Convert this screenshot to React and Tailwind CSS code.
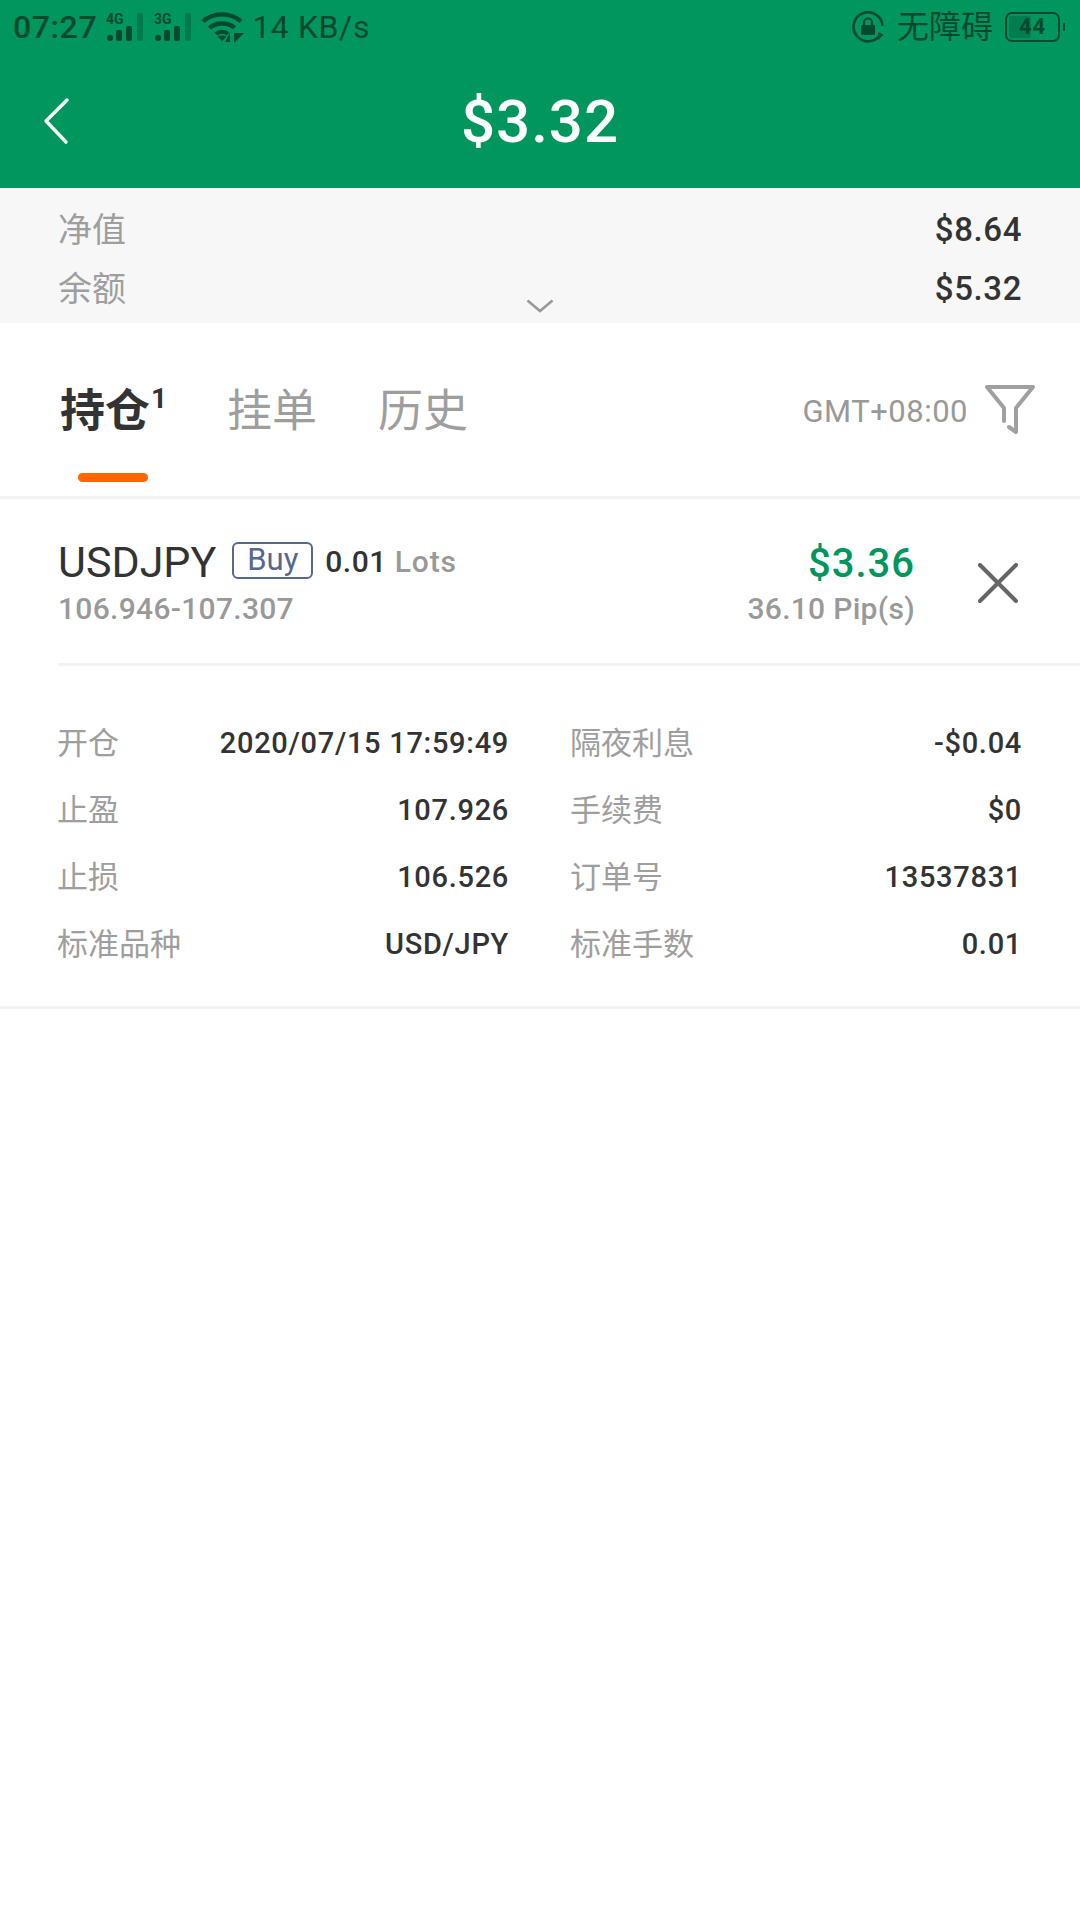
function Signal({ label }) {
  return (
    <svg width="37" height="29" viewBox="0 0 37 29" className="shrink-0 overflow-visible">
      <text x="0" y="11" fontSize="14" fontWeight="700" fontFamily="Roboto" fill="#03492e">{label}</text>
      <circle cx="4" cy="25" r="3" fill="#03492e" />
      <rect x="10" y="17" width="6" height="11" rx="2" fill="#03492e" />
      <rect x="20" y="13" width="6" height="15" rx="2" fill="#03492e" />
      <rect x="31" y="0" width="6" height="28" rx="2" fill="#03492e" fillOpacity="0.35" />
    </svg>
  )
}

function Wifi() {
  return (
    <svg width="44" height="32" viewBox="0 0 44 32" fill="none" className="shrink-0">
      <path d="M2 10.5C12 1 30 1 40 10.5" stroke="#03492e" strokeWidth="4.4" />
      <path d="M8.5 17C15 11 27 11 33.5 17" stroke="#03492e" strokeWidth="4.4" />
      <path d="M15 23C18 20 24 20 27 23" stroke="#03492e" strokeWidth="4" />
      <path d="M21 30L16.5 25.5C19 24 23 24 25.5 25.5Z" fill="#03492e" />
      <path d="M29 22V31H24ZM33 32V22L43 22Z" fill="#03492e" />
    </svg>
  )
}

function LockRotate() {
  return (
    <svg width="32" height="32" viewBox="0 0 32 32" fill="none" className="shrink-0">
      <path d="M28 24A14.5 14.5 0 1 1 30.5 15" stroke="#03492e" strokeWidth="2.6" />
      <path d="M26.5 21L31.5 24L26 29Z" fill="#03492e" />
      <path d="M12 14V11.5A4 4 0 0 1 20 11.5V14" stroke="#03492e" strokeWidth="2.2" />
      <rect x="9" y="14" width="14" height="10" rx="1" fill="#03492e" />
    </svg>
  )
}

function Battery() {
  return (
    <div className="flex items-center gap-[3px]">
      <div className="relative w-[55px] h-[30px] rounded-[7px] border-2 border-[#03492e] overflow-hidden flex items-center justify-center">
        <div className="absolute left-[2px] top-[2px] bottom-[2px] w-[22px] rounded-[2px] bg-[#03492e]/30" />
        <span className="relative text-[22px] font-bold leading-none tracking-[1px] text-[#03492e]">44</span>
      </div>
      <div className="w-[2px] h-[8px] rounded-sm bg-[#03492e]" />
    </div>
  )
}

function StatusBar() {
  return (
    <div className="h-[54px] flex items-center justify-between pl-[13px] pr-[15px] text-[#03492e]">
      <div className="flex items-center">
        <span className="text-[32px] font-medium leading-none tracking-[0.6px]">07:27</span>
        <div className="ml-[9px] flex items-center gap-[11px]">
          <Signal label="4G" />
          <Signal label="3G" />
        </div>
        <div className="ml-[10px]"><Wifi /></div>
        <span className="ml-[7px] text-[32px] leading-none tracking-[0.6px]">14 KB/s</span>
      </div>
      <div className="flex items-center">
        <LockRotate />
        <span className="ml-[13px] text-[32px] leading-none">无障碍</span>
        <div className="ml-[12px]"><Battery /></div>
      </div>
    </div>
  )
}

function Header() {
  return (
    <div className="bg-[#00965e] h-[188px] flex flex-col">
      <StatusBar />
      <div className="grid grid-cols-[1fr_auto_1fr] items-center h-[134px]">
        <svg width="27" height="48" viewBox="0 0 27 48" fill="none" className="ml-[43px]">
          <path d="M24 3L3 24L23 45" stroke="#fff" strokeWidth="3.4" strokeLinecap="round" strokeLinejoin="round" />
        </svg>
        <span className="pt-[2px] text-[60px] font-medium leading-none text-white tracking-[1px]">$3.32</span>
        <span />
      </div>
    </div>
  )
}

function Summary() {
  return (
    <div className="relative bg-[#f7f7f7] h-[135px] pt-[13px] pl-[58px] pr-[58px]">
      <div className="flex justify-between items-center h-[59px]">
        <span className="text-[34px] text-[#9e9e9e]">净值</span>
        <span className="text-[33px] font-medium text-[#333] tracking-[0.6px] -mt-[2px]">$8.64</span>
      </div>
      <div className="flex justify-between items-center h-[59px]">
        <span className="text-[34px] text-[#9e9e9e]">余额</span>
        <span className="text-[33px] font-medium text-[#333] tracking-[0.6px] -mt-[2px]">$5.32</span>
      </div>
      <svg width="28" height="14" viewBox="0 0 28 14" fill="none" className="absolute left-[526px] top-[111px]">
        <path d="M1.5 1.5L14 12L26.5 1.5" stroke="#999" strokeWidth="2.6" />
      </svg>
    </div>
  )
}

function Tabs() {
  return (
    <div className="h-[176px] border-b-[3px] border-[#f2f2f2] flex items-start pl-[60px] pr-[44px] pt-[63px]">
      <div className="relative w-[167px]">
        <span className="text-[45px] font-bold leading-[52px] text-[#333]">持仓</span>
        <span className="absolute left-[91px] top-[-1px] text-[28px] font-bold leading-none text-[#333]">1</span>
        <div className="absolute left-[18px] top-[87px] w-[70px] h-[9px] rounded-full bg-[#ff6600]" />
      </div>
      <span className="text-[45px] leading-[52px] text-[#9e9e9e] w-[151px]">挂单</span>
      <span className="text-[45px] leading-[52px] text-[#9e9e9e]">历史</span>
      <div className="ml-auto flex items-center">
        <span className="text-[31px] text-[#999] leading-[52px] tracking-[0.5px]">GMT+08:00</span>
        <svg width="52" height="54" viewBox="0 0 52 54" fill="none" className="ml-[16px] -mt-[4px]">
          <path d="M3 4H49L32 25V49L25 44M20 38V25L3 4" stroke="#a0a0a0" strokeWidth="4" strokeLinejoin="round" strokeLinecap="round" />
        </svg>
      </div>
    </div>
  )
}

function PositionHead() {
  return (
    <div className="ml-[58px] h-[167px] border-b-[3px] border-[#f2f2f2] flex pr-[62px]">
      <div className="pt-[41px]">
        <div className="flex items-center h-[44px]">
          <span className="text-[43px] leading-none text-[#333]">USDJPY</span>
          <span className="ml-[16px] -mt-[4px] w-[81px] h-[37px] rounded-[6px] border-2 border-[#56698a] text-[#56698a] text-[31px] leading-[31px] text-center">Buy</span>
          <span className="ml-[12px] text-[30px] font-medium leading-none text-[#333] tracking-[0.5px]">0.01</span>
          <span className="ml-[8px] text-[30px] font-medium leading-none text-[#999] tracking-[0.8px]">Lots</span>
        </div>
        <div className="mt-[6px] text-[30px] font-medium leading-[38px] text-[#999] tracking-[0.3px]">106.946-107.307</div>
      </div>
      <div className="ml-auto pt-[43px] text-right">
        <div className="h-[44px] text-[40px] font-medium leading-[44px] text-[#00965e] tracking-[1px]">$3.36</div>
        <div className="mt-[4px] text-[30px] font-medium leading-[38px] text-[#999] tracking-[0.3px]">36.10 Pip(s)</div>
      </div>
      <svg width="40" height="40" viewBox="0 0 40 40" fill="none" className="ml-[63px] mt-[64px] shrink-0">
        <path d="M2 2L38 38M38 2L2 38" stroke="#666" strokeWidth="4" strokeLinecap="round" />
      </svg>
    </div>
  )
}

const details = [
  ["开仓", "2020/07/15 17:59:49"],
  ["隔夜利息", "-$0.04"],
  ["止盈", "107.926"],
  ["手续费", "$0"],
  ["止损", "106.526"],
  ["订单号", "13537831"],
  ["标准品种", "USD/JPY"],
  ["标准手数", "0.01"],
]

function Details() {
  return (
    <div className="grid grid-cols-[452px_452px] gap-x-[61px] pl-[57px] pt-[44px] pb-[28px] border-b-[3px] border-[#f2f2f2]">
      {details.map(([k, v]) => (
        <div key={k} className="h-[67px] flex items-center justify-between">
          <span className="pt-[2px] text-[31px] text-[#9e9e9e]">{k}</span>
          <span className="text-[29px] font-medium text-[#333] tracking-[0.7px]">{v}</span>
        </div>
      ))}
    </div>
  )
}

export default function App() {
  return (
    <div className="w-[1080px] h-[1920px] bg-white font-['Roboto','Noto_Sans_CJK_SC',sans-serif]">
      <Header />
      <Summary />
      <Tabs />
      <PositionHead />
      <Details />
    </div>
  )
}
